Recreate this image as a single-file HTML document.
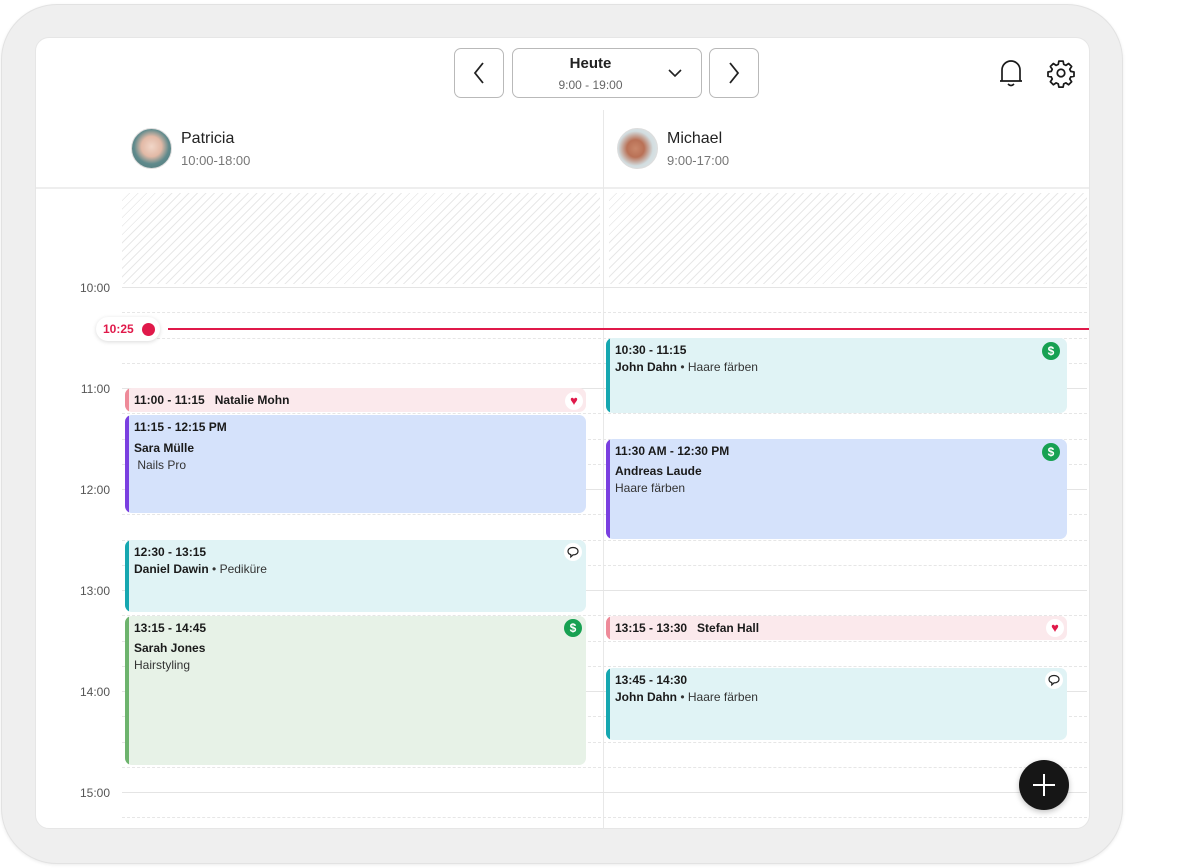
<!DOCTYPE html>
<html><head><meta charset="utf-8">
<style>
*{box-sizing:border-box;margin:0;padding:0}
body{width:1180px;height:868px;background:#fff;font-family:"Liberation Sans",sans-serif;position:relative;overflow:hidden;color:#1a1a1a}
.dev{position:absolute;left:1px;top:4px;width:1122px;height:860px;background:#efefef;border-radius:56px;border:1px solid #e2e2e2;box-shadow:0 1px 3px rgba(0,0,0,.08)}
.scr{position:absolute;left:35px;top:37px;width:1055px;height:792px;background:#fff;border-radius:14px;overflow:hidden;border:1px solid #e6e6e6}
.a{position:absolute}
.btn{position:absolute;border:1px solid #b9b9b9;border-radius:7px;background:#fff}
.hl{position:absolute;height:0;border-top:1px solid #e4e4e4}
.dl{position:absolute;height:0;border-top:1px dashed #e6e6e6}
.hatch{position:absolute;background:repeating-linear-gradient(135deg,#fff 0,#fff 5px,#e8e8e8 5px,#e8e8e8 6px)}
.tl{position:absolute;width:74px;text-align:right;font-size:12px;color:#555}
.ev{position:absolute;border-radius:7px;overflow:hidden;font-size:12px;padding:5px 0 0 9px}
.ev:before{content:"";position:absolute;left:0;top:0;bottom:0;width:4px}
.pink{background:#fbe9ec}.pink:before{background:#ee8a99}
.blue{background:#d5e2fb}.blue:before{background:#7a3fe0}
.teal{background:#e0f3f5}.teal:before{background:#16a7b0}
.green{background:#e7f2e7}.green:before{background:#6db36d}
.b{font-weight:bold;color:#1a1a1a}
.s{color:#333}
.ic{position:absolute;width:18px;height:18px;border-radius:50%}
.dol{background:#17a152;color:#fff;font-size:12px;font-weight:bold;text-align:center;line-height:18px}
.wh{background:#fff}
</style></head><body>
<div class="dev"></div>
<div class="scr">
<div class="btn" style="left:418px;top:10px;width:50px;height:50px"><svg width="50" height="50" style="position:absolute;left:-1px;top:-1px"><path d="M29 15 L21 25 L29 35" fill="none" stroke="#222" stroke-width="1.8"/></svg></div>
<div class="btn" style="left:476px;top:10px;width:190px;height:50px">
<div class="a" style="left:0;width:155px;top:6px;text-align:center;font-size:15px;font-weight:bold;color:#222">Heute</div>
<div class="a" style="left:0;width:155px;top:29px;text-align:center;font-size:12px;color:#666">9:00 - 19:00</div>
<svg class="a" style="left:154px;top:16px" width="16" height="16"><path d="M2 5 L8 11 L14 5" fill="none" stroke="#222" stroke-width="1.6"/></svg>
</div>
<div class="btn" style="left:673px;top:10px;width:50px;height:50px"><svg width="50" height="50" style="position:absolute;left:-1px;top:-1px"><path d="M21 15 L29 25 L21 35" fill="none" stroke="#222" stroke-width="1.8"/></svg></div>
<svg class="a" style="left:960px;top:19px" width="30" height="32"><path d="M6 24 L6 13 A9 9 0 0 1 24 13 L24 24 Z M4 24 L26 24 M12 27 Q15 30 18 27" fill="none" stroke="#1a1a1a" stroke-width="1.7" stroke-linejoin="round"/></svg>
<svg class="a" style="left:1010px;top:20px" width="30" height="30" viewBox="0 0 24 24"><path d="M10.3 2.5h3.4l.5 2.6 1.7.8 2.2-1.5 2.4 2.4-1.5 2.2.8 1.7 2.6.5v3.4l-2.6.5-.8 1.7 1.5 2.2-2.4 2.4-2.2-1.5-1.7.8-.5 2.6h-3.4l-.5-2.6-1.7-.8-2.2 1.5-2.4-2.4 1.5-2.2-.8-1.7-2.6-.5v-3.4l2.6-.5.8-1.7-1.5-2.2 2.4-2.4 2.2 1.5 1.7-.8z" fill="none" stroke="#1a1a1a" stroke-width="1.4" stroke-linejoin="round"/><circle cx="12" cy="12" r="3" fill="none" stroke="#1a1a1a" stroke-width="1.4"/></svg>
<div class="a" style="left:95px;top:90px;width:41px;height:41px;border-radius:50%;background:radial-gradient(circle at 50% 45%,#f1d6c8 0,#e2b9a6 35%,#5f8a8c 60%,#4e7475 100%);border:1px solid #ddd"></div>
<div class="a" style="left:145px;top:92px;font-size:16px;color:#222">Patricia</div>
<div class="a" style="left:145px;top:115px;font-size:13px;color:#777">10:00-18:00</div>
<div class="a" style="left:581px;top:90px;width:41px;height:41px;border-radius:50%;background:radial-gradient(circle at 45% 50%,#c9876a 0,#b97156 30%,#d2dde0 60%,#e8e8e8 100%);border:1px solid #ddd"></div>
<div class="a" style="left:631px;top:92px;font-size:16px;color:#222">Michael</div>
<div class="a" style="left:631px;top:115px;font-size:13px;color:#777">9:00-17:00</div>
<div class="a" style="left:0;top:149px;width:1055px;height:2px;background:#eeeeee"></div>
<div class="a" style="left:567px;top:72px;width:1px;height:720px;background:#e8e8e8"></div>
<div class="hatch" style="left:86px;top:155px;width:478px;height:91px"></div>
<div class="hatch" style="left:573px;top:155px;width:478px;height:91px"></div>
<div class="hl" style="left:86px;width:965px;top:249px"></div>
<div class="dl" style="left:86px;width:965px;top:274px"></div>
<div class="dl" style="left:86px;width:965px;top:300px"></div>
<div class="dl" style="left:86px;width:965px;top:325px"></div>
<div class="hl" style="left:86px;width:965px;top:350px"></div>
<div class="dl" style="left:86px;width:965px;top:375px"></div>
<div class="dl" style="left:86px;width:965px;top:401px"></div>
<div class="dl" style="left:86px;width:965px;top:426px"></div>
<div class="hl" style="left:86px;width:965px;top:451px"></div>
<div class="dl" style="left:86px;width:965px;top:476px"></div>
<div class="dl" style="left:86px;width:965px;top:502px"></div>
<div class="dl" style="left:86px;width:965px;top:527px"></div>
<div class="hl" style="left:86px;width:965px;top:552px"></div>
<div class="dl" style="left:86px;width:965px;top:577px"></div>
<div class="dl" style="left:86px;width:965px;top:603px"></div>
<div class="dl" style="left:86px;width:965px;top:628px"></div>
<div class="hl" style="left:86px;width:965px;top:653px"></div>
<div class="dl" style="left:86px;width:965px;top:678px"></div>
<div class="dl" style="left:86px;width:965px;top:704px"></div>
<div class="dl" style="left:86px;width:965px;top:729px"></div>
<div class="hl" style="left:86px;width:965px;top:754px"></div>
<div class="dl" style="left:86px;width:965px;top:779px"></div>
<div class="tl" style="left:0;top:243px">10:00</div>
<div class="tl" style="left:0;top:344px">11:00</div>
<div class="tl" style="left:0;top:445px">12:00</div>
<div class="tl" style="left:0;top:546px">13:00</div>
<div class="tl" style="left:0;top:647px">14:00</div>
<div class="tl" style="left:0;top:748px">15:00</div>
<div class="a" style="left:132px;top:290px;width:923px;height:2px;background:#e0194a"></div>
<div class="a" style="left:60px;top:279px;width:64px;height:24px;border-radius:12px;background:#fff;box-shadow:0 1px 4px rgba(0,0,0,.15)"></div>
<div class="a" style="left:67px;top:284px;font-size:12px;font-weight:bold;color:#e0194a">10:25</div>
<div class="a" style="left:106px;top:285px;width:13px;height:13px;border-radius:50%;background:#e0194a"></div>
<div class="ev pink" style="left:89px;top:350px;width:461px;height:24px;padding-top:5px"><span class="b">11:00 - 11:15&nbsp;&nbsp; Natalie Mohn</span></div>
<div class="ic wh" style="left:529px;top:354px;color:#e0194a;font-size:13px;text-align:center;line-height:18px">&#9829;</div>
<div class="ev blue" style="left:89px;top:377px;width:461px;height:98px"><div class="b">11:15 - 12:15 PM</div><div class="b" style="margin-top:7px">Sara Mülle</div><div class="s" style="margin-top:3px">&nbsp;Nails Pro</div></div>
<div class="ev teal" style="left:89px;top:502px;width:461px;height:72px"><div class="b">12:30 - 13:15</div><div style="margin-top:3px"><span class="b">Daniel Dawin</span> <span class="s">• Pediküre</span></div></div>
<div class="ic wh" style="left:528px;top:505px"><svg width="18" height="18"><path d="M9 4.5c3 0 5 1.6 5 3.7s-2 3.7-5 3.7l-2.2 2v-2.3c-1.7-.5-2.8-1.8-2.8-3.4 0-2.1 2-3.7 5-3.7z" fill="none" stroke="#222" stroke-width="1.2"/></svg></div>
<div class="ev green" style="left:89px;top:578px;width:461px;height:149px"><div class="b">13:15 - 14:45</div><div class="b" style="margin-top:6px">Sarah Jones</div><div class="s" style="margin-top:3px">Hairstyling</div></div>
<div class="ic dol" style="left:528px;top:581px">$</div>
<div class="ev teal" style="left:570px;top:300px;width:461px;height:75px"><div class="b">10:30 - 11:15</div><div style="margin-top:3px"><span class="b">John Dahn</span> <span class="s">• Haare färben</span></div></div>
<div class="ic dol" style="left:1006px;top:304px">$</div>
<div class="ev blue" style="left:570px;top:401px;width:461px;height:100px"><div class="b">11:30 AM - 12:30 PM</div><div class="b" style="margin-top:6px">Andreas Laude</div><div class="s" style="margin-top:3px">Haare färben</div></div>
<div class="ic dol" style="left:1006px;top:405px">$</div>
<div class="ev pink" style="left:570px;top:578px;width:461px;height:24px;padding-top:5px"><span class="b">13:15 - 13:30&nbsp;&nbsp; Stefan Hall</span></div>
<div class="ic wh" style="left:1010px;top:581px;color:#e0194a;font-size:13px;text-align:center;line-height:18px">&#9829;</div>
<div class="ev teal" style="left:570px;top:630px;width:461px;height:72px"><div class="b">13:45 - 14:30</div><div style="margin-top:3px"><span class="b">John Dahn</span> <span class="s">• Haare färben</span></div></div>
<div class="ic wh" style="left:1009px;top:633px"><svg width="18" height="18"><path d="M9 4.5c3 0 5 1.6 5 3.7s-2 3.7-5 3.7l-2.2 2v-2.3c-1.7-.5-2.8-1.8-2.8-3.4 0-2.1 2-3.7 5-3.7z" fill="none" stroke="#222" stroke-width="1.2"/></svg></div>
<div class="a" style="left:983px;top:722px;width:50px;height:50px;border-radius:50%;background:#161616;box-shadow:0 2px 6px rgba(0,0,0,.25)"><svg width="50" height="50"><path d="M25 14v22M14 25h22" stroke="#fff" stroke-width="2"/></svg></div>
</div>
</body></html>
